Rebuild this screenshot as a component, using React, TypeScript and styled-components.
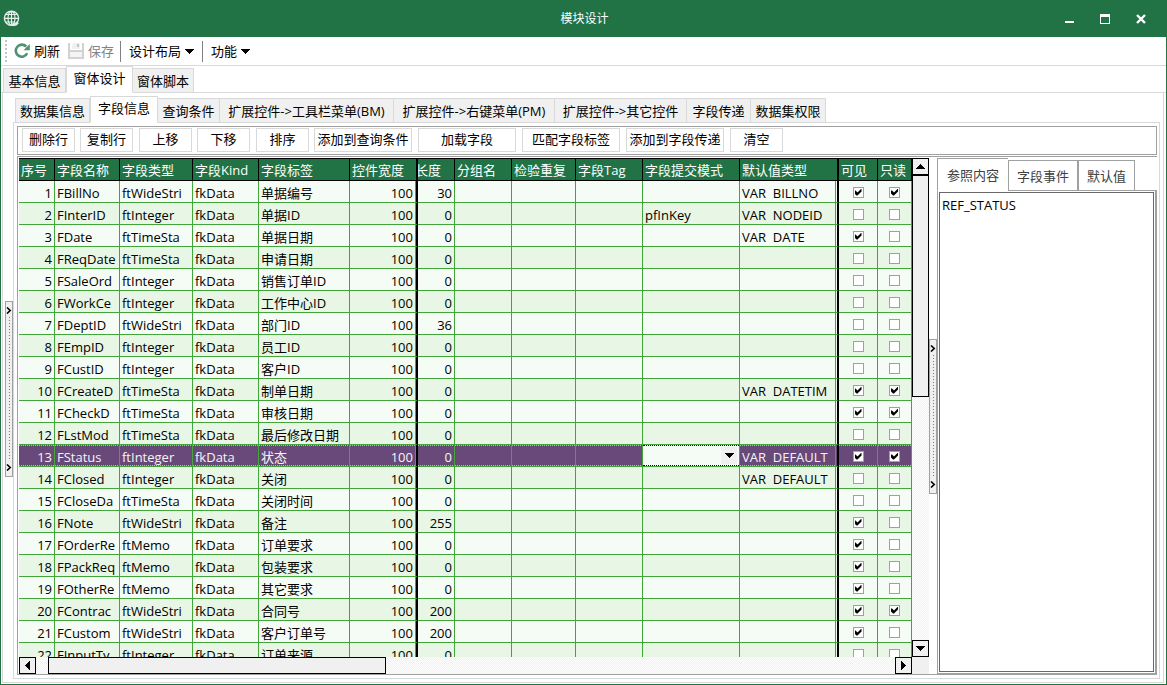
import React, { useState } from "react";
import styled, { createGlobalStyle, css } from "styled-components";

const green = "#217346";
const line = "#43a63b";
const tabLine = "#d9d9d9";
const frame = "#a0a0a0";

const GlobalStyle = createGlobalStyle`
  * { box-sizing: border-box; }
  html, body, #root { height: 100%; margin: 0; }
  body, button, select, textarea, input {
    font-family: "Open Sans", "Noto Sans CJK SC", sans-serif;
    font-size: 13px;
    line-height: 18px;
    color: #000;
  }
  button { cursor: default; padding: 0; white-space: nowrap; }
`;

const Window = styled.div`
  display: flex;
  flex-direction: column;
  height: 100vh;
  border: 1px solid ${green};
  border-top: 0;
  background: #fff;
  overflow: hidden;
`;

const TitleBar = styled.header`
  display: grid;
  grid-template-columns: 1fr auto 1fr;
  align-items: center;
  flex: none;
  height: 37px;
  padding-left: 2px;
  background: ${green};
  color: #fff;
`;

const Title = styled.h1`
  margin: 0;
  font-size: 12px;
  font-weight: 400;
`;

const WindowButtons = styled.div`
  display: flex;
  justify-content: flex-end;
  padding-right: 7px;
`;

const WindowButton = styled.button`
  display: grid;
  place-items: center;
  width: 36px;
  height: 30px;
  border: 0;
  background: none;
`;

const Toolbar = styled.div`
  display: flex;
  align-items: center;
  flex: none;
  height: 29px;
  padding-left: 4px;
  border-bottom: 1px solid ${tabLine};
`;

const Grip = styled.span`
  width: 2px;
  height: 22px;
  margin-right: 7px;
  background: repeating-linear-gradient(#c4c4c4 0 2px, #fff 2px 4px);
`;

const ToolButton = styled.button`
  display: flex;
  align-items: center;
  gap: 4px;
  margin-right: 8px;
  border: 0;
  background: none;
  &:disabled { color: #848484; }
`;

const Separator = styled.span<{ $tight?: boolean }>`
  width: 1px;
  height: 21px;
  margin: 0 8px 0 ${(p) => (p.$tight ? -2 : 0)}px;
  background: #808080;
`;

const TabStrip = styled.div`
  display: flex;
  align-items: flex-end;
  flex: none;
  height: 27px;
  padding-left: 2px;
  box-shadow: inset 0 -1px ${tabLine};
`;

const Tab = styled.button<{ $active?: boolean; $width: number }>`
  flex: none;
  width: ${(p) => p.$width}px;
  height: 25px;
  border: 1px solid ${tabLine};
  border-left-width: 0;
  background: #f0f0f0;
  &:first-child { border-left-width: 1px; }
  ${(p) => p.$active && css`
    height: 27px;
    padding-bottom: 4px;
    border-left-width: 1px;
    border-bottom-color: #fff;
    background: #fff;
  `}
`;

const OuterPage = styled.div`
  display: flex;
  flex: 1;
  min-height: 0;
  margin: 0 2px 1px 1px;
  border: 1px solid ${tabLine};
  border-top: 0;
`;

const SplitGutter = styled.div<{ $drop: number }>`
  display: flex;
  align-items: center;
  flex: none;
  width: 8px;
  padding-top: ${(p) => p.$drop}px;
`;

const SplitHandle = styled.button<{ $height: number }>`
  display: flex;
  flex-direction: column;
  align-items: center;
  justify-content: space-between;
  width: 8px;
  height: ${(p) => p.$height}px;
  padding: 5px 0;
  border: 1px solid ${frame};
  background: #f0f0f0;
`;

const SplitDots = styled.span`
  flex: 1;
  width: 1px;
  margin: 3px 0;
  background: repeating-linear-gradient(#3b8fd0 0 1px, #f0f0f0 1px 3px);
`;

const OuterSplit = styled.div`
  display: flex;
  flex: none;
  padding-left: 2px;
`;

const InnerArea = styled.div`
  display: flex;
  flex: 1;
  flex-direction: column;
  min-width: 0;
  margin: 3px 3px 3px 0;
`;

const InnerPage = styled.div`
  display: flex;
  flex: 1;
  flex-direction: column;
  gap: 1px;
  min-height: 0;
  padding: 3px 2px 3px 3px;
  border: 1px solid ${tabLine};
  border-top: 0;
`;

const CommandBar = styled.div`
  display: flex;
  align-items: flex-start;
  flex: none;
  gap: 6px;
  height: 29px;
  padding: 1px 0 0 4px;
  border: 1px solid ${frame};
`;

const CommandGroup = styled.div`
  display: flex;
  gap: 5px;
`;

const Command = styled.button<{ $wide?: boolean }>`
  width: ${(p) => (p.$wide ? 98 : 53)}px;
  height: 24px;
  padding-bottom: 2px;
  border: 1px solid ${tabLine};
  background: #fff;
`;

const Work = styled.div`
  display: flex;
  flex: 1;
  min-height: 0;
  padding-top: 1px;
  border: 1px solid ${frame};
  border-right: 0;
`;

const GridPane = styled.div`
  display: grid;
  grid-template: minmax(0, 1fr) 17px / 893px 17px;
  flex: none;
  padding-left: 1px;
`;

const GridView = styled.div`
  overflow: hidden;
`;

const Table = styled.table`
  width: 893px;
  table-layout: fixed;
  border-collapse: separate;
  border-spacing: 0;
`;

const Th = styled.th<{ $thick?: boolean; $cut?: boolean }>`
  height: 23px;
  padding: 0 0 0 ${(p) => (p.$cut ? 0 : 2)}px;
  border: solid #000;
  border-width: 1px ${(p) => (p.$thick ? 2 : 1)}px 1px 0;
  background: ${green};
  color: #fff;
  font-weight: 400;
  text-align: left;
  text-indent: ${(p) => (p.$cut ? -3 : 0)}px;
  white-space: nowrap;
  overflow: hidden;
`;

const Td = styled.td<{ $right?: boolean; $center?: boolean; $edge?: number }>`
  height: 22px;
  padding: ${(p) => (p.$center ? "0 0 2px" : `3px ${p.$edge ? 3 : 2}px 0 2px`)};
  border-bottom: 1px solid ${line};
  border-right: ${(p) => (p.$edge ? "2px solid #000" : `1px solid ${line}`)};
  background: var(--row);
  box-shadow: ${(p) =>
    p.$edge === 1
      ? `inset -1px 0 ${line}`
      : p.$edge === 2
        ? `inset -1px 0 var(--row), inset -2px 0 ${line}`
        : "none"};
  line-height: 18px;
  text-align: ${(p) => (p.$right ? "right" : p.$center ? "center" : "left")};
  vertical-align: ${(p) => (p.$center ? "middle" : "top")};
  white-space: pre;
  overflow: hidden;
`;

const Tr = styled.tr<{ $selected: boolean }>`
  --row: #f5fcf5;
  &:nth-child(even) { --row: #e8f6e5; }
  ${(p) => p.$selected && css`
    && { --row: #68497a; }
    ${Td} {
      color: #f5f5f5;
      background:
        repeating-linear-gradient(90deg, #a9c79b 0 1px, #68497a 1px 2px) 0 0 / 100% 1px no-repeat,
        repeating-linear-gradient(90deg, #a9c79b 0 1px, #68497a 1px 2px) 0 100% / 100% 1px no-repeat,
        #68497a;
      background-origin: padding-box;
    }
  `}
`;

const Check = styled.input`
  appearance: none;
  display: inline-grid;
  place-items: center;
  width: 11px;
  height: 11px;
  margin: 0;
  border: 1px solid ${frame};
  background: #fff;
  vertical-align: middle;
  &:checked::before {
    content: "";
    width: 7px;
    height: 7px;
    background: #000;
    clip-path: polygon(0 2px, 1px 2px, 3px 4px, 7px 0, 7px 3px, 3px 7px, 2px 7px, 0 5px);
  }
`;

const PickerCell = styled(Td)`
  && {
    padding: 0;
    background: #f5fcf5;
    line-height: 0;
  }
`;

const PickerBox = styled.div`
  display: grid;
  align-items: center;
  height: 21px;
  border: dotted #000;
  border-width: 1px 0;
`;

const Picker = styled.select`
  appearance: none;
  grid-area: 1 / 1;
  width: 100%;
  height: 19px;
  border: 0;
  outline: 0;
  background: none;
`;

const PickerArrow = styled.span`
  display: grid;
  place-items: center;
  grid-area: 1 / 1;
  justify-self: end;
  width: 16px;
  height: 17px;
  margin-right: 2px;
  background: #f0f0f0;
  pointer-events: none;
`;

const Track = styled.div<{ $vertical?: boolean }>`
  display: flex;
  flex-direction: ${(p) => (p.$vertical ? "column" : "row")};
  min-height: 0;
  background: repeating-conic-gradient(#f0f0f0 0 25%, #fff 0 50%) 0 0 / 2px 2px;
`;

const ScrollButton = styled.button`
  display: grid;
  place-items: center;
  flex: none;
  width: 17px;
  height: 17px;
  border: 1px solid #000;
  background: #f0f0f0;
`;

const ThumbV = styled.div`
  flex: 0 1 222px;
  margin-bottom: auto;
  border: 1px solid #000;
  background: #f0f0f0;
`;

const ThumbH = styled.div`
  flex: 0 1 338px;
  margin: 0 auto 0 12px;
  border: 1px solid #000;
  background: #f0f0f0;
`;

const Corner = styled.div`
  background: #f0f0f0;
`;

const SidePanel = styled.section`
  display: flex;
  flex: 1;
  flex-direction: column;
  min-width: 0;
`;

const SideTabs = styled.div`
  display: flex;
  align-items: flex-end;
  flex: none;
  height: 33px;
  box-shadow: inset 0 -1px ${frame};
`;

const SideTab = styled.button<{ $active?: boolean; $width: number }>`
  width: ${(p) => p.$width}px;
  height: ${(p) => (p.$active ? 33 : 31)}px;
  border: 1px solid ${frame};
  border-right-width: ${(p) => (p.$active ? 0 : 1)}px;
  border-bottom-color: ${(p) => (p.$active ? "#fff" : frame)};
  background: #fff;
  color: #404040;
`;

const SideBody = styled.div`
  display: flex;
  flex: 1;
  min-height: 0;
  padding: 1px;
  border: solid ${frame};
  border-width: 0 2px 1px 1px;
`;

const Memo = styled.textarea`
  flex: 1;
  min-width: 0;
  padding: 3px 2px;
  border: 1px solid #696969;
  outline: 0;
  resize: none;
  background: #fff;
`;

type ArrowDir = "up" | "down" | "left" | "right";
const turns: Record<ArrowDir, number> = { down: 0, left: 90, up: 180, right: 270 };

const Arrow = ({ dir = "down" }: { dir?: ArrowDir }) => (
  <svg width="9" height="9" viewBox="0 0 9 9" aria-hidden="true" shapeRendering="crispEdges">
    <path d="M0 2H9L4.5 7Z" transform={`rotate(${turns[dir]} 4.5 4.5)`} />
  </svg>
);

const Chevron = () => (
  <svg width="6" height="7" viewBox="0 0 6 7" aria-hidden="true">
    <path d="M1 0.5L4.2 3.5L1 6.5" fill="none" stroke="#000" strokeWidth="1.6" />
  </svg>
);

const GlobeIcon = () => (
  <svg width="17" height="17" viewBox="0 0 17 17" fill="none" stroke="#e6f0ea" aria-hidden="true">
    <circle cx="8.5" cy="8.3" r="7.1" strokeWidth="1.4" />
    <ellipse cx="8.5" cy="8.3" rx="3.5" ry="7" strokeWidth="1.2" />
    <path d="M8.5 1V15.5M1.5 8.3H15.5M2.5 4.5H14.5M2.5 12H12" strokeWidth="1.2" />
    <path d="M9.500 13.200c1.600.8 3.200.3 3.800-1.400l2.200 1.200c-.8 1.900-3.200 3.300-6 2.400z" fill="#e6f0ea" strokeWidth="0.5" />
  </svg>
);

const RefreshIcon = () => (
  <svg width="16" height="16" viewBox="0 0 16 16" aria-hidden="true">
    <path d="M13.2 10.3A6 6 0 1 1 12.3 3.7" fill="none" stroke="#4f9272" strokeWidth="2.6" />
    <path d="M15.8 1V7.3H9.5Z" fill="#4f9272" />
  </svg>
);

const SaveIcon = () => (
  <svg width="16" height="16" viewBox="0 0 16 16" aria-hidden="true">
    <path d="M0 0H2V7H14V0H16V16H0Z" fill="#d2d2d2" />
    <path d="M5 0H12V6H4V3Z" fill="#f0f0f0" />
    <path d="M9 1H11V4H9Z" fill="#c4c4c4" />
    <path d="M2 9H14V14H2Z" fill="#f4f4f4" />
  </svg>
);

const columns: { label: string; width: number }[] = [
  { label: "序号", width: 36 },
  { label: "字段名称", width: 65 },
  { label: "字段类型", width: 73 },
  { label: "字段Kind", width: 66 },
  { label: "字段标签", width: 91 },
  { label: "控件宽度", width: 68 },
  { label: "长度", width: 37 },
  { label: "分组名", width: 57 },
  { label: "检验重复", width: 64 },
  { label: "字段Tag", width: 67 },
  { label: "字段提交模式", width: 97 },
  { label: "默认值类型", width: 99 },
  { label: "可见", width: 39 },
  { label: "只读", width: 34 },
];

type Field = {
  name: string;
  type: string;
  label: string;
  length: number;
  visible: boolean;
  readOnly: boolean;
  mode?: string;
  preset?: string;
};

const f = (
  name: string, type: string, label: string, length: number,
  visible: boolean, readOnly: boolean, preset = "", mode = "",
): Field => ({ name, type, label, length, visible, readOnly, preset, mode });

const fields: Field[] = [
  f("FBillNo", "ftWideStri", "单据编号", 30, true, true, "VAR  BILLNO"),
  f("FInterID", "ftInteger", "单据ID", 0, false, false, "VAR  NODEID", "pfInKey"),
  f("FDate", "ftTimeSta", "单据日期", 0, true, false, "VAR  DATE"),
  f("FReqDate", "ftTimeSta", "申请日期", 0, false, false),
  f("FSaleOrd", "ftInteger", "销售订单ID", 0, false, false),
  f("FWorkCe", "ftInteger", "工作中心ID", 0, false, false),
  f("FDeptID", "ftWideStri", "部门ID", 36, false, false),
  f("FEmpID", "ftInteger", "员工ID", 0, false, false),
  f("FCustID", "ftInteger", "客户ID", 0, false, false),
  f("FCreateD", "ftTimeSta", "制单日期", 0, true, true, "VAR  DATETIM"),
  f("FCheckD", "ftTimeSta", "审核日期", 0, true, true),
  f("FLstMod", "ftTimeSta", "最后修改日期", 0, false, false),
  f("FStatus", "ftInteger", "状态", 0, true, true, "VAR  DEFAULT"),
  f("FClosed", "ftInteger", "关闭", 0, false, false, "VAR  DEFAULT"),
  f("FCloseDa", "ftTimeSta", "关闭时间", 0, false, false),
  f("FNote", "ftWideStri", "备注", 255, true, false),
  f("FOrderRe", "ftMemo", "订单要求", 0, true, false),
  f("FPackReq", "ftMemo", "包装要求", 0, true, false),
  f("FOtherRe", "ftMemo", "其它要求", 0, true, false),
  f("FContrac", "ftWideStri", "合同号", 200, true, true),
  f("FCustom", "ftWideStri", "客户订单号", 200, true, false),
  f("FInputTy", "ftInteger", "订单来源", 0, false, false),
];

const selectedRow = 12;

const outerTabs = [
  { label: "基本信息", width: 63 },
  { label: "窗体设计", width: 67, active: true },
  { label: "窗体脚本", width: 61 },
];

const innerTabs = [
  { label: "数据集信息", width: 75 },
  { label: "字段信息", width: 68, active: true },
  { label: "查询条件", width: 62 },
  { label: "扩展控件->工具栏菜单(BM)", width: 174 },
  { label: "扩展控件->右键菜单(PM)", width: 161 },
  { label: "扩展控件->其它控件", width: 132 },
  { label: "字段传递", width: 64 },
  { label: "数据集权限", width: 75 },
];

const commandGroups = [
  ["删除行", "复制行"],
  ["上移", "下移"],
  ["排序", "添加到查询条件"],
  ["加载字段"],
  ["匹配字段标签"],
  ["添加到字段传递"],
  ["清空"],
];

const FieldRow = ({ field, index }: { field: Field; index: number }) => {
  const selected = index === selectedRow;
  return (
    <Tr $selected={selected} aria-selected={selected}>
      <Td $right>{index + 1}</Td>
      <Td>{field.name}</Td>
      <Td>{field.type}</Td>
      <Td>fkData</Td>
      <Td>{field.label}</Td>
      <Td $right $edge={1}>100</Td>
      <Td $right>{field.length}</Td>
      <Td />
      <Td />
      <Td />
      {selected ? (
        <PickerCell>
          <PickerBox>
            <Picker aria-label="字段提交模式">
              <option value="" />
              <option>pfInKey</option>
            </Picker>
            <PickerArrow><Arrow /></PickerArrow>
          </PickerBox>
        </PickerCell>
      ) : (
        <Td>{field.mode}</Td>
      )}
      <Td $edge={2}>{field.preset}</Td>
      <Td $center><Check type="checkbox" aria-label="可见" defaultChecked={field.visible} /></Td>
      <Td $center><Check type="checkbox" aria-label="只读" defaultChecked={field.readOnly} /></Td>
    </Tr>
  );
};

const Splitter = ({ height, drop = 0, label }: { height: number; drop?: number; label: string }) => (
  <SplitGutter $drop={drop}>
    <SplitHandle $height={height} aria-label={label}>
      <Chevron />
      <SplitDots />
      <Chevron />
    </SplitHandle>
  </SplitGutter>
);

export default function App() {
  const [memo, setMemo] = useState("REF_STATUS");
  return (
    <>
      <GlobalStyle />
      <Window>
        <TitleBar>
          <GlobeIcon />
          <Title>模块设计</Title>
          <WindowButtons>
            <WindowButton aria-label="最小化">
              <svg width="10" height="10"><path d="M1 7H10V9H1Z" fill="#fff" /></svg>
            </WindowButton>
            <WindowButton aria-label="最大化">
              <svg width="10" height="10" shapeRendering="crispEdges">
                <path d="M0 0H10V10H0ZM1 3V9H9V3Z" fill="#fff" fillRule="evenodd" />
              </svg>
            </WindowButton>
            <WindowButton aria-label="关闭">
              <svg width="10" height="10"><path d="M1 1L9 9M9 1L1 9" stroke="#fff" strokeWidth="2.4" /></svg>
            </WindowButton>
          </WindowButtons>
        </TitleBar>

        <Toolbar>
          <Grip />
          <ToolButton><RefreshIcon />刷新</ToolButton>
          <ToolButton disabled><SaveIcon />保存</ToolButton>
          <Separator $tight />
          <ToolButton>设计布局<Arrow /></ToolButton>
          <Separator />
          <ToolButton>功能<Arrow /></ToolButton>
        </Toolbar>

        <TabStrip role="tablist">
          {outerTabs.map((t) => (
            <Tab key={t.label} role="tab" $width={t.width} $active={t.active}>{t.label}</Tab>
          ))}
        </TabStrip>

        <OuterPage>
          <OuterSplit>
            <Splitter height={176} drop={2} label="左侧分隔条" />
          </OuterSplit>
          <InnerArea>
            <TabStrip role="tablist">
              {innerTabs.map((t) => (
                <Tab key={t.label} role="tab" $width={t.width} $active={t.active}>{t.label}</Tab>
              ))}
            </TabStrip>
            <InnerPage>
              <CommandBar>
                {commandGroups.map((group) => (
                  <CommandGroup key={group[0]}>
                    {group.map((c) => (
                      <Command key={c} $wide={c.length > 3}>{c}</Command>
                    ))}
                  </CommandGroup>
                ))}
              </CommandBar>
              <Work>
                <GridPane>
                  <GridView>
                    <Table>
                      <colgroup>
                        {columns.map((c) => <col key={c.label} style={{ width: c.width }} />)}
                      </colgroup>
                      <thead>
                        <tr>
                          {columns.map((c, i) => (
                            <Th key={c.label} $thick={i === 5 || i === 11} $cut={i === 6}>{c.label}</Th>
                          ))}
                        </tr>
                      </thead>
                      <tbody>
                        {fields.map((field, i) => <FieldRow key={field.name} field={field} index={i} />)}
                      </tbody>
                    </Table>
                  </GridView>
                  <Track $vertical>
                    <ScrollButton aria-label="向上"><Arrow dir="up" /></ScrollButton>
                    <ThumbV />
                    <ScrollButton aria-label="向下"><Arrow /></ScrollButton>
                  </Track>
                  <Track>
                    <ScrollButton aria-label="向左"><Arrow dir="left" /></ScrollButton>
                    <ThumbH />
                    <ScrollButton aria-label="向右"><Arrow dir="right" /></ScrollButton>
                  </Track>
                  <Corner />
                </GridPane>
                <Splitter height={155} label="右侧分隔条" />
                <SidePanel>
                  <SideTabs role="tablist">
                    <SideTab role="tab" $active $width={71}>参照内容</SideTab>
                    <SideTab role="tab" $width={70}>字段事件</SideTab>
                    <SideTab role="tab" $width={57}>默认值</SideTab>
                  </SideTabs>
                  <SideBody>
                    <Memo aria-label="参照内容" value={memo} spellCheck={false} onChange={(e) => setMemo(e.target.value)} />
                  </SideBody>
                </SidePanel>
              </Work>
            </InnerPage>
          </InnerArea>
        </OuterPage>
      </Window>
    </>
  );
}
